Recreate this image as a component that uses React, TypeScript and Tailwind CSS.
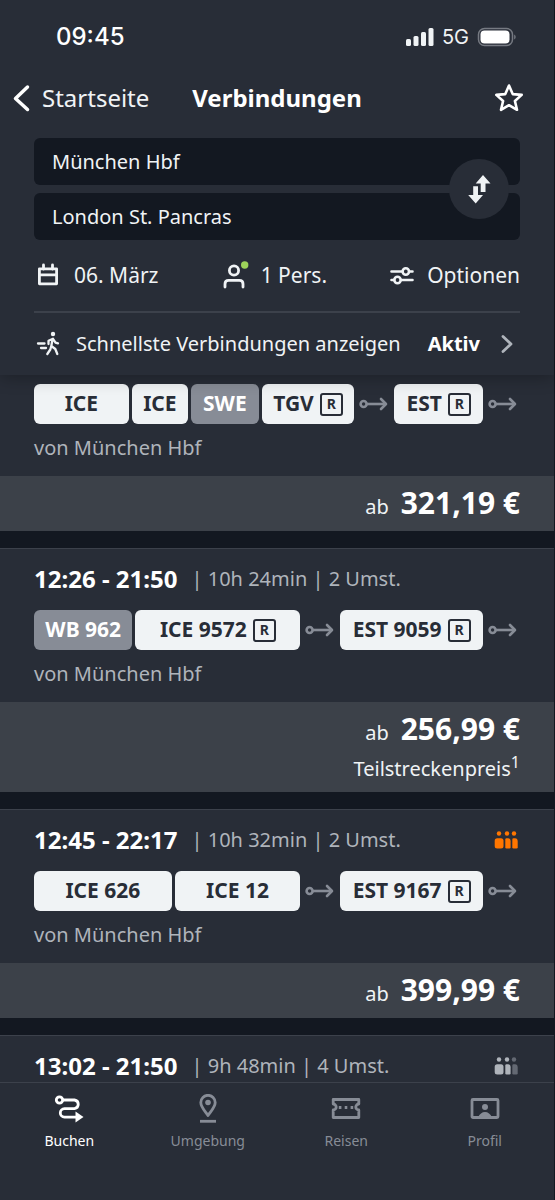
type Leg = { kind: 'train'; name: string; weight: number; reserved?: boolean; muted?: boolean } | { kind: 'walk' }

type Connection = {
  time?: string
  info?: string
  crowd?: 'high' | 'medium'
  legs?: Leg[]
  price?: string
  partial?: boolean
}

const connections: Connection[] = [
  {
    legs: [
      { kind: 'train', name: 'ICE', weight: 94 },
      { kind: 'train', name: 'ICE', weight: 56 },
      { kind: 'train', name: 'SWE', weight: 67, muted: true },
      { kind: 'train', name: 'TGV', weight: 92, reserved: true },
      { kind: 'walk' },
      { kind: 'train', name: 'EST', weight: 88, reserved: true },
      { kind: 'walk' },
    ],
    price: '321,19 €',
  },
  {
    time: '12:26 - 21:50',
    info: '| 10h 24min | 2 Umst.',
    legs: [
      { kind: 'train', name: 'WB 962', weight: 98, muted: true },
      { kind: 'train', name: 'ICE 9572', weight: 164, reserved: true },
      { kind: 'walk' },
      { kind: 'train', name: 'EST 9059', weight: 142, reserved: true },
      { kind: 'walk' },
    ],
    price: '256,99 €',
    partial: true,
  },
  {
    time: '12:45 - 22:17',
    info: '| 10h 32min | 2 Umst.',
    crowd: 'high',
    legs: [
      { kind: 'train', name: 'ICE 626', weight: 137 },
      { kind: 'train', name: 'ICE 12', weight: 125 },
      { kind: 'walk' },
      { kind: 'train', name: 'EST 9167', weight: 142, reserved: true },
      { kind: 'walk' },
    ],
    price: '399,99 €',
  },
  { time: '13:02 - 21:50', info: '| 9h 48min | 4 Umst.', crowd: 'medium' },
]

function StatusBar() {
  return (
    <div className="flex h-[74px] items-center justify-between pl-14 pr-[37px] font-['Inter',sans-serif]">
      <span className="text-2xl font-medium text-white">09:45</span>
      <div className="flex items-center gap-2">
        <svg width="29" height="20" viewBox="0 0 29 20" fill="currentColor">
          <rect x="1" y="12" width="5" height="7" rx="1.5" />
          <rect x="8.5" y="9" width="5" height="10" rx="1.5" />
          <rect x="16" y="5" width="5" height="14" rx="1.5" />
          <rect x="23.5" y="1" width="5" height="18" rx="1.5" />
        </svg>
        <span className="text-xl">5G</span>
        <svg width="40" height="20" viewBox="0 0 40 20">
          <rect x="1.5" y="1.5" width="34" height="17" rx="6" fill="none" stroke="#767a82" strokeWidth="1.5" />
          <rect x="3.5" y="3.5" width="29" height="13" rx="4" fill="#fff" />
          <path d="M37.2 7.5c2 1 2 4 0 5z" fill="#767a82" />
        </svg>
      </div>
    </div>
  )
}

function WalkArrow() {
  return (
    <svg className="shrink-0" width="34" height="16" viewBox="0 0 34 16" fill="none" stroke="#878c96" strokeWidth="2.6">
      <circle cx="6.6" cy="8" r="3" />
      <path d="M10 8h18" />
      <path d="M24 3l5 5-5 5" strokeLinecap="round" strokeLinejoin="round" />
    </svg>
  )
}

function Crowd({ level }: { level: 'high' | 'medium' }) {
  const main = level === 'high' ? '#ff7600' : '#afb4bb'
  const last = level === 'high' ? '#ff7600' : '#646973'
  return (
    <svg width="24" height="20" viewBox="0 0 24 20" fill={main}>
      <circle cx="5" cy="3.5" r="2.2" />
      <circle cx="13" cy="3.5" r="2.2" />
      <rect x="0.7" y="8.3" width="8.8" height="10.2" rx="2.5" />
      <path d="M11.3 9.5q0-1.2 1.200-1.200h1.500q2.600 0 2.600 3v6q0 1.200-1.200 1.200h-2.900q-1.200 0-1.200-1.200z" />
      <g fill={last}>
        <circle cx="20" cy="3.5" r="2.2" />
        <path d="M18.300 9.500q0-1.200 1.200-1.200h1.500q2.700 0 2.700 3v6q0 1.200-1.200 1.200h-3q-1.200 0-1.200-1.200z" />
      </g>
    </svg>
  )
}

function ConnectionCard({ c }: { c: Connection }) {
  return (
    <article className={c.time ? 'border-t border-[#3c414b] bg-[#282d37]' : 'bg-[#282d37] pt-[9px]'}>
      {c.time && (
        <div className={c.legs ? 'flex items-center px-[34px] pt-[14px] pb-[15px]' : 'flex items-center px-[34px] pt-[14px]'}>
          <h2 className="text-2xl leading-8 font-bold whitespace-nowrap text-white">{c.time}</h2>
          <span className="ml-3.5 text-xl leading-8 whitespace-nowrap text-[#afb4bb]">{c.info}</span>
          <span className="mr-0.5 ml-auto">{c.crowd && <Crowd level={c.crowd} />}</span>
        </div>
      )}
      {c.legs && (
        <>
          <ul className="flex items-center gap-[3px] px-[34px]">
            {c.legs.map((leg, i) =>
              leg.kind === 'walk' ? (
                <li key={i}>
                  <WalkArrow />
                </li>
              ) : (
                <li
                  key={i}
                  style={{ flexGrow: leg.weight }}
                  className={`flex h-10 basis-0 items-center justify-center gap-1.5 rounded-md text-[21px] font-bold whitespace-nowrap ${
                    leg.muted ? 'bg-[#878c96] text-white' : 'bg-[#f0f3f5] text-[#282d37]'
                  }`}
                >
                  {leg.name}
                  {leg.reserved && (
                    <span className="flex size-[23px] items-center justify-center rounded-[3px] border-2 border-[#282d37] text-sm leading-none">
                      R
                    </span>
                  )}
                </li>
              ),
            )}
          </ul>
          <p className="h-[52px] px-[34px] text-xl leading-[48px] text-[#afb4bb]">von München Hbf</p>
          <div className="bg-[#3c4149] px-[34px] pb-px text-right">
            <p className="flex h-[54px] items-baseline justify-end gap-3 leading-[54px]">
              <span className="text-xl">ab</span>
              <strong className="text-[30px] font-bold text-white">{c.price}</strong>
            </p>
            {c.partial && (
              <p className="h-[35px] text-xl leading-[26px]">
                Teilstreckenpreis<sup className="text-base">1</sup>
              </p>
            )}
          </div>
          <div className="h-[17px] bg-[#131821]" />
        </>
      )}
    </article>
  )
}

function Header() {
  return (
    <header className="relative z-10 shadow-[0_2px_16px_rgba(0,0,0,0.3)]">
      <StatusBar />
      <div className="grid h-12 grid-cols-[1fr_auto_1fr] items-center px-3">
        <button className="flex items-center gap-3 text-2xl">
          <svg width="18" height="28" viewBox="0 0 18 28" fill="none" stroke="#fff" strokeWidth="3.5" strokeLinecap="round" strokeLinejoin="round">
            <path d="M15.500 3L3.500 14.500l12 11" />
          </svg>
          Startseite
        </button>
        <h1 className="text-2xl font-bold text-white">Verbindungen</h1>
        <button aria-label="Favorit" className="mr-[18px] justify-self-end">
          <svg width="30" height="30" viewBox="0 0 30 30" fill="none" stroke="#fff" strokeWidth="2.600" strokeLinejoin="round">
            <path d="M15 2.500l3.700 8.600 9 .8-6.800 6.100 2.100 8.800L15 22.200l-8 4.600 2.100-8.800-6.800-6.100 9-.8z" />
          </svg>
        </button>
      </div>

      <div className="relative mx-[34px] mt-4 flex flex-col gap-2">
        <input aria-label="Start" defaultValue="München Hbf" className="h-[47px] w-full rounded-md bg-[#131821] pl-[18px] pr-20 text-xl outline-none" />
        <input aria-label="Ziel" defaultValue="London St. Pancras" className="h-[47px] w-full rounded-md bg-[#131821] pl-[18px] pr-20 text-xl outline-none" />
        <button aria-label="Tauschen" className="absolute top-1/2 right-[11px] flex size-[60px] -translate-y-1/2 items-center justify-center rounded-full bg-[#282d37]">
          <svg width="30" height="30" viewBox="0 0 30 30" fill="#f0f3f5">
            <path d="M19 1l7.500 8.500h-5v8.500h-4.800V9.500h-5z" />
            <path d="M11.700 29.500L4.200 21h5v-8.700H14V21h5z" />
          </svg>
        </button>
      </div>

      <div className="mx-[34px] flex h-[71px] items-center justify-between text-[21px]">
        <button className="flex items-center gap-3">
          <svg width="28" height="28" viewBox="0 0 28 28" fill="none" stroke="#f0f3f5" strokeWidth="2.800" strokeLinejoin="round">
            <path d="M5.400 6.800h17.200v15H5.400zM5.400 12.800h17.200" />
            <path d="M9.500 3v4M18.500 3v4" strokeLinecap="round" />
          </svg>
          06. März
        </button>
        <button className="flex items-center gap-3">
          <svg width="28" height="30" viewBox="0 0 28 30" fill="none" stroke="#f0f3f5" strokeWidth="2.800">
            <circle cx="13" cy="9.500" r="4.600" />
            <path d="M4 26v-3q0-3.600 3.600-3.600h10.800q3.600 0 3.600 3.600v3" strokeLinecap="round" />
            <circle cx="23.700" cy="4" r="3.700" fill="#9dd35a" stroke="none" />
          </svg>
          1 Pers.
        </button>
        <button className="flex items-center gap-3">
          <svg width="26" height="22" viewBox="0 0 26 22" fill="none" stroke="#f0f3f5" strokeWidth="2.600" strokeLinecap="round">
            <path d="M2.500 6.500h10.600M20.500 6.500h3M2.500 15h2.700M12 15h11.500" />
            <circle cx="16.800" cy="6.500" r="3.200" />
            <circle cx="8.500" cy="15" r="3.200" />
          </svg>
          Optionen
        </button>
      </div>

      <button className="mx-[34px] flex h-16 w-[calc(100%-68px)] items-center border-t-2 border-[#3c414b] text-left text-xl">
        <svg width="28" height="28" viewBox="0 0 28 28" fill="none" stroke="#f0f3f5" strokeWidth="2.300" strokeLinecap="round" strokeLinejoin="round">
          <circle cx="19" cy="4" r="2.200" fill="#f0f3f5" stroke="none" />
          <path d="M4 13.500h6.500M7 18h5" />
          <path d="M14.500 14v-3.200l4.500-2 2.500 3.800 2.500.8M18.500 9.500L17.300 16l4 3 2 5M17.300 16l-1 3.500-3 4.500" />
        </svg>
        <span className="ml-[14px] whitespace-nowrap">Schnellste Verbindungen anzeigen</span>
        <strong className="ml-auto text-white">Aktiv</strong>
        <svg className="ml-[18px]" width="22" height="22" viewBox="0 0 22 22" fill="none" stroke="#afb4bb" strokeWidth="2.800" strokeLinecap="round" strokeLinejoin="round">
          <path d="M5 3.500l8 7.500-8 7.500" />
        </svg>
      </button>
    </header>
  )
}

const tabs = [
  {
    label: 'Buchen',
    active: true,
    icon: (
      <>
        <circle cx="5.500" cy="6" r="3.200" />
        <path d="M9 6h11.500a4.400 4.400 0 0 1 0 8.700H10.500a4.200 4.200 0 0 0 0 8.400H23" />
        <path d="M21.500 17.500l8 5.600-8 5.400z" fill="currentColor" stroke="none" />
      </>
    ),
  },
  {
    label: 'Umgebung',
    icon: (
      <>
        <path d="M15 21.500c-3-4.400-7.200-8.500-7.200-13a7.200 7.200 0 0 1 14.400 0c0 4.500-4.200 8.600-7.200 13z" />
        <circle cx="15" cy="8.500" r="2.800" fill="currentColor" stroke="none" />
        <path d="M7 27.300h16" />
      </>
    ),
  },
  {
    label: 'Reisen',
    icon: (
      <>
        <path d="M2.200 5.500h25.600v4.500a3 3 0 0 0 0 6v7.500H2.200v-7.500a3 3 0 0 0 0-6z" />
        <path d="M7.800 13.500h2.600M13.700 13.500h2.600M19.600 13.500h2.600" />
      </>
    ),
  },
  {
    label: 'Profil',
    icon: (
      <>
        <rect x="2" y="5.500" width="26" height="18" rx="1" />
        <circle cx="15" cy="13" r="3" fill="currentColor" stroke="none" />
        <path d="M8 23.500q2.500-5.500 7-5.500t7 5.500z" fill="currentColor" stroke="none" />
      </>
    ),
  },
]

function App() {
  return (
    <div className="flex min-h-screen flex-col border-r border-[#131821] bg-[#282d37] font-['Noto_Sans',sans-serif] text-[#f0f3f5]">
      <Header />
      <main className="flex-1">
        {connections.map((c, i) => (
          <ConnectionCard key={i} c={c} />
        ))}
      </main>
      <nav className="grid h-[118px] grid-cols-4 border-t border-[#3c414b] pt-[11px]">
        {tabs.map((tab) => (
          <a key={tab.label} href="#" className={`flex flex-col items-center gap-[7px] text-sm ${tab.active ? 'text-white' : 'text-[#878c96]'}`}>
            <svg width="30" height="30" viewBox="0 0 30 30" fill="none" stroke="currentColor" strokeWidth="2.800" strokeLinejoin="round">
              {tab.icon}
            </svg>
            {tab.label}
          </a>
        ))}
      </nav>
    </div>
  )
}

export default App
